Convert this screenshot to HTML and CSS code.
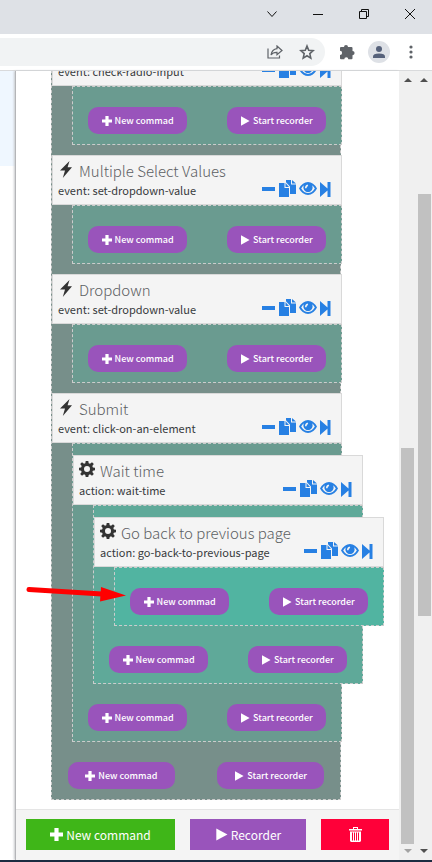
FILE: index.html
```html
<!DOCTYPE html>
<html lang="en">
<head>
<meta charset="utf-8">
<title>Command tree</title>
<link rel="stylesheet" href="styles.css">
</head>
<body>
<svg class="sprite" aria-hidden="true">
  <symbol id="plus" viewBox="0 0 10 10"><path d="M3.4 0h3.2v3.4H10v3.2H6.6V10H3.4V6.6H0V3.4h3.4z"/></symbol>
  <symbol id="play" viewBox="0 0 10 10"><path d="M1 .3 9.6 5 1 9.7z"/></symbol>
  <symbol id="bolt" viewBox="0 0 12 17"><path d="M9.500 0 0 9.500h5L2.800 17 12 6.200H7.600z"/></symbol>
  <symbol id="gear" viewBox="0 0 16 16"><path fill-rule="evenodd" d="M6.700 0h2.600l.4 2.200 1.300.6 2-1.500 1.800 1.800-1.500 2 .6 1.300 2.100.3v2.600l-2.100.4-.6 1.300 1.500 2-1.800 1.800-2-1.500-1.300.6L9.300 16H6.700l-.4-2.100-1.300-.6-2 1.500L1.200 13l1.500-2-.6-1.300L0 9.300V6.700l2.100-.3.6-1.300-1.500-2L3 1.300l2 1.500 1.300-.6zM8 5a3 3 0 1 0 0 6 3 3 0 0 0 0-6z"/></symbol>
  <symbol id="minus" viewBox="0 0 14 17"><path d="M0 7h13v4H0z"/></symbol>
  <symbol id="copy" viewBox="0 0 17 17"><path d="M0 3h5.500v5H10v9H0zM6.500 3 10 7H6.500zM7 0h5v4.500h5V14h-6V6.500L7 2.200zM13 0l4 3.500h-4z"/></symbol>
  <symbol id="eye" viewBox="0 0 18 17"><path fill-rule="evenodd" d="M0 8.500Q3.500 2 9 2t9 6.500Q14.500 15 9 15T0 8.500zm2.200 0Q5 13 9 13t6.800-4.500Q14.500 6.300 13 5.200a4.600 4.600 0 1 1-8 0Q3.500 6.300 2.200 8.500zM8.600 4.500Q6 5 6 8.200h1.500Q7.600 6.500 9.200 6z"/></symbol>
  <symbol id="step" viewBox="0 0 11 17"><path d="M0 2l7.500 6.500V2H10.500v15H7.500v-6.500L0 17z"/></symbol>
  <symbol id="trash" viewBox="0 0 13 15"><path fill-rule="evenodd" d="M4 0h5v2h4v1.500H0V2h4zm1 1v1h3V1zM1 4.500h11V14l-1 1H2l-1-1zM3 5.500v8h1v-8zm2 0v8h1v-8zm2 0v8h1v-8zm2 0v8h1v-8z"/></symbol>
</svg>

<div class="window">
  <header class="titlebar">
    <button class="caption" aria-label="Search tabs"><svg width="10" height="10" viewBox="0 0 10 10"><path d="M.5 2.500 5 7.500 9.500 2.500"/></svg></button>
    <button class="caption" aria-label="Minimize"><svg width="10" height="10" viewBox="0 0 10 10"><path d="M0 5.500h10"/></svg></button>
    <button class="caption" aria-label="Restore"><svg width="10" height="10" viewBox="0 0 10 10"><path d="M.5 2.500h7v7h-7zM2.500 2.500v-2h7v7h-2"/></svg></button>
    <button class="caption" aria-label="Close"><svg width="10" height="10" viewBox="0 0 10 10"><path d="M0 0l10 10M10 0 0 10"/></svg></button>
  </header>
  <div class="toolbar">
    <div class="omnibox">
      <button class="tool" aria-label="Share"><svg class="line" width="16" height="14" viewBox="0 0 16 14"><path d="M1 3.500V13h11.500v-2.500M10 1l5 4.500-5 4.200V7.300q-4-.2-6 2.700Q5 4.200 10 3.700z"/></svg></button>
      <button class="tool" aria-label="Bookmark"><svg class="line star" width="16" height="16" viewBox="0 0 16 16"><path d="M8 2l1.700 4.200 4.500.4-3.400 3 1 4.500L8 11.700l-3.800 2.400 1-4.500-3.400-3 4.500-.4z"/></svg></button>
    </div>
    <button class="tool" aria-label="Extensions"><svg width="16" height="16" viewBox="0 0 16 16"><path d="M5 3a2 2 0 0 1 4 0h3.500q1 0 1 1v3a2.100 2.100 0 0 1 0 4.200v3q0 1-1 1H9.300a2 2 0 0 0-4 0H2q-1 0-1-1V11a2.100 2.100 0 0 0 0-4.200V4q0-1 1-1z"/></svg></button>
    <button class="tool" aria-label="Profile"><svg width="22" height="22" viewBox="0 0 22 22"><circle class="disc" cx="11" cy="11" r="11"/><circle class="person" cx="11" cy="8" r="3"/><path class="person" d="M5 17v-1.500q0-3 6-3t6 3V17z"/></svg></button>
    <button class="tool" aria-label="Menu"><svg width="4" height="14" viewBox="0 0 4 14"><circle cx="2" cy="2" r="1.600"/><circle cx="2" cy="7" r="1.600"/><circle cx="2" cy="12" r="1.600"/></svg></button>
  </div>

  <div class="page">
    <aside class="behind"><div class="selected"></div></aside>
    <main class="panel">
      <div class="scroller">
        <div class="tree">
          <section class="node">
            <div class="head">
              <div class="info"><h2></h2><p>event: check-radio-input</p></div>
              <div class="actions"><button aria-label="Collapse"><svg width="14" height="17"><use href="#minus"/></svg></button><button aria-label="Copy"><svg width="17" height="17"><use href="#copy"/></svg></button><button aria-label="View"><svg width="18" height="17"><use href="#eye"/></svg></button><button aria-label="Run step"><svg width="11" height="17"><use href="#step"/></svg></button></div>
            </div>
            <div class="body">
              <div class="row"><button class="pill"><svg><use href="#plus"/></svg>New commad</button><button class="pill"><svg><use href="#play"/></svg>Start recorder</button></div>
            </div>
          </section>
          <section class="node">
            <div class="head">
              <div class="info"><h2><svg class="bolt"><use href="#bolt"/></svg>Multiple Select Values</h2><p>event: set-dropdown-value</p></div>
              <div class="actions"><button aria-label="Collapse"><svg width="14" height="17"><use href="#minus"/></svg></button><button aria-label="Copy"><svg width="17" height="17"><use href="#copy"/></svg></button><button aria-label="View"><svg width="18" height="17"><use href="#eye"/></svg></button><button aria-label="Run step"><svg width="11" height="17"><use href="#step"/></svg></button></div>
            </div>
            <div class="body">
              <div class="row"><button class="pill"><svg><use href="#plus"/></svg>New commad</button><button class="pill"><svg><use href="#play"/></svg>Start recorder</button></div>
            </div>
          </section>
          <section class="node">
            <div class="head">
              <div class="info"><h2><svg class="bolt"><use href="#bolt"/></svg>Dropdown</h2><p>event: set-dropdown-value</p></div>
              <div class="actions"><button aria-label="Collapse"><svg width="14" height="17"><use href="#minus"/></svg></button><button aria-label="Copy"><svg width="17" height="17"><use href="#copy"/></svg></button><button aria-label="View"><svg width="18" height="17"><use href="#eye"/></svg></button><button aria-label="Run step"><svg width="11" height="17"><use href="#step"/></svg></button></div>
            </div>
            <div class="body">
              <div class="row"><button class="pill"><svg><use href="#plus"/></svg>New commad</button><button class="pill"><svg><use href="#play"/></svg>Start recorder</button></div>
            </div>
          </section>
          <section class="node">
            <div class="head">
              <div class="info"><h2><svg class="bolt"><use href="#bolt"/></svg>Submit</h2><p>event: click-on-an-element</p></div>
              <div class="actions"><button aria-label="Collapse"><svg width="14" height="17"><use href="#minus"/></svg></button><button aria-label="Copy"><svg width="17" height="17"><use href="#copy"/></svg></button><button aria-label="View"><svg width="18" height="17"><use href="#eye"/></svg></button><button aria-label="Run step"><svg width="11" height="17"><use href="#step"/></svg></button></div>
            </div>
            <div class="body">
              <section class="node">
                <div class="head">
                  <div class="info"><h2><svg class="gear"><use href="#gear"/></svg>Wait time</h2><p>action: wait-time</p></div>
                  <div class="actions"><button aria-label="Collapse"><svg width="14" height="17"><use href="#minus"/></svg></button><button aria-label="Copy"><svg width="17" height="17"><use href="#copy"/></svg></button><button aria-label="View"><svg width="18" height="17"><use href="#eye"/></svg></button><button aria-label="Run step"><svg width="11" height="17"><use href="#step"/></svg></button></div>
                </div>
                <div class="body level-2">
                  <section class="node">
                    <div class="head">
                      <div class="info"><h2><svg class="gear"><use href="#gear"/></svg>Go back to previous page</h2><p>action: go-back-to-previous-page</p></div>
                      <div class="actions"><button aria-label="Collapse"><svg width="14" height="17"><use href="#minus"/></svg></button><button aria-label="Copy"><svg width="17" height="17"><use href="#copy"/></svg></button><button aria-label="View"><svg width="18" height="17"><use href="#eye"/></svg></button><button aria-label="Run step"><svg width="11" height="17"><use href="#step"/></svg></button></div>
                    </div>
                    <div class="body level-3">
                      <div class="row"><button class="pill"><svg><use href="#plus"/></svg>New commad</button><button class="pill"><svg><use href="#play"/></svg>Start recorder</button></div>
                      <svg class="pointer" width="100" height="16" viewBox="0 0 100 16" aria-hidden="true"><path class="shaft" d="M3 3.500 76 8"/><path d="M75 1l25 8.500-26 6z"/></svg>
                    </div>
                  </section>
                  <div class="row"><button class="pill"><svg><use href="#plus"/></svg>New commad</button><button class="pill"><svg><use href="#play"/></svg>Start recorder</button></div>
                </div>
              </section>
              <div class="row"><button class="pill"><svg><use href="#plus"/></svg>New commad</button><button class="pill"><svg><use href="#play"/></svg>Start recorder</button></div>
            </div>
          </section>
          <div class="row wide"><button class="pill"><svg><use href="#plus"/></svg>New commad</button><button class="pill"><svg><use href="#play"/></svg>Start recorder</button></div>
        </div>
      </div>
      <footer class="footer">
        <button class="add"><svg width="13" height="13"><use href="#plus"/></svg>New command</button>
        <button class="record"><svg width="13" height="13"><use href="#play"/></svg>Recorder</button>
        <button class="delete" aria-label="Delete"><svg width="13" height="15"><use href="#trash"/></svg></button>
      </footer>
    </main>
    <div class="scrollbar inner" aria-hidden="true"><i class="up"></i><div class="track"><div class="thumb"></div></div><i class="down off"></i></div>
    <div class="scrollbar outer" aria-hidden="true"><i class="up"></i><div class="track"><div class="thumb"></div></div><i class="down"></i></div>
  </div>
  <div class="taskbar"></div>
</div>
</body>
</html>
```
FILE: styles.css
```css
* { box-sizing: border-box; }
body {
  margin: 0;
  font-family: "Noto Sans CJK SC", "Noto Sans", sans-serif;
  color: #373a3c;
  background: #fff;
}
button {
  margin: 0;
  padding: 0;
  border: 0;
  background: none;
  font: inherit;
  color: inherit;
}
svg { display: block; flex: none; fill: currentColor; }
.sprite { position: absolute; width: 0; height: 0; }

.window { display: flex; flex-direction: column; height: 100vh; overflow: hidden; }

/* Browser frame */
.titlebar {
  display: flex;
  justify-content: flex-end;
  flex: none;
  height: 34px;
  padding-bottom: 6px;
  margin-right: -1px;
  background: #dee1e6;
}
.caption { display: grid; place-items: center; width: 46px; }
.caption svg { fill: none; stroke: #111; overflow: visible; }
.toolbar {
  display: flex;
  align-items: center;
  flex: none;
  height: 37px;
  padding-right: 5px;
  border-bottom: 1px solid #d9dadc;
  color: #5f6368;
}
.omnibox {
  display: flex;
  justify-content: flex-end;
  flex: 1;
  height: 28px;
  margin-right: 6px;
  padding-right: 2px;
  border-radius: 0 14px 14px 0;
  background: #f1f3f4;
}
.tool { display: grid; place-items: center; width: 32px; height: 28px; }
.line { fill: none; stroke: #5f6368; stroke-width: 1.2; }
.star { stroke-width: 1.6; }
.disc { fill: #dee1e6; }
.person { fill: #56617a; }

/* Page */
.page { display: flex; flex: 1; min-height: 0; }
.behind { flex: none; width: 15px; }
.selected { height: 95px; background: #eff7ff; }
.panel {
  display: flex;
  flex-direction: column;
  flex: 1;
  min-width: 0;
  border-left: 1px solid #b4b5b8;
  box-shadow: -1px 0 2px #c8c9cc;
}
.scroller { flex: 1; min-height: 0; overflow: hidden; }

/* Command tree */
.tree {
  margin: -36px 58px 0 35px;
  border: 1px dashed #ccc;
  background: #778f8a;
}
.node { margin-right: -22px; }
.tree > .node { margin: 0 -2px 10px 0; }
.tree > .node:nth-last-child(2) { margin-bottom: 0; }
.head {
  display: flex;
  justify-content: space-between;
  height: 50px;
  padding: 3px 10px 0 5px;
  border: 1px solid #d9d9d9;
  background: #f4f4f4;
}
.info { white-space: nowrap; }
.info h2 {
  display: flex;
  align-items: center;
  gap: 5px;
  height: 24px;
  margin: 0;
  font-size: 15px;
  line-height: 24px;
  font-weight: 300;
  color: #5c6063;
}
.info p { margin: 0; font-size: 11px; line-height: 14px; }
.bolt { width: 12px; height: 17px; margin: 0 2px 4px; color: #333; }
.gear { width: 16px; height: 16px; margin-bottom: 5px; color: #333; }
.actions {
  display: flex;
  align-items: flex-end;
  gap: 3px;
  padding-bottom: 7px;
  color: #2780e3;
}
.body {
  position: relative;
  margin-left: 20px;
  border: 1px dashed #ccc;
  background: #6a9b90;
}
.body > .node { padding-top: 11px; }
.level-2 { background: #5fa999; }
.level-3 { background: #51b4a1; }
.row {
  display: grid;
  grid-template-columns: 5fr 2fr 5fr;
  padding: 20px 15px 10px;
}
.row.wide { padding: 20px 16px 10px; }
.row .pill:last-child { grid-column: 3; }
.pill {
  display: flex;
  align-items: center;
  justify-content: center;
  gap: 3px;
  height: 27px;
  border-radius: 10px;
  background: #9954bb;
  color: #fff;
  font-size: 9px;
  font-weight: 500;
  white-space: nowrap;
}
.pill svg { width: 10px; height: 10px; }
.pointer {
  position: absolute;
  left: -89px;
  top: 18px;
  color: #f00;
}
.shaft { fill: none; stroke: #f00; stroke-width: 5; stroke-linecap: round; }

/* Footer */
.footer {
  display: grid;
  grid-template-columns: 149fr 116fr 68fr;
  gap: 15px;
  flex: none;
  padding: 9px 10px 10px;
  border-top: 1px solid #e5e5e5;
  background: #f4f4f4;
}
.footer button {
  display: flex;
  align-items: center;
  justify-content: center;
  gap: 3px;
  height: 31px;
  color: #fff;
  font-size: 12px;
}
.footer .add { background: #3fb618; }
.footer .record { background: #9954bb; }
.footer .delete { background: #ff0039; }

/* Scrollbars */
.scrollbar {
  display: flex;
  flex-direction: column;
  align-items: center;
  flex: none;
  width: 17px;
  padding: 7px 0;
  background: #f0f0f0;
}
.scrollbar.outer { width: 16px; }
.up, .down { border: 4px solid transparent; }
.up { border-top: 0; border-bottom-color: #505050; }
.down { border-bottom: 0; border-top-color: #505050; }
.down.off { border-top-color: #a3a3a3; }
.track { display: flex; flex-direction: column; flex: 1; width: 13px; }
.thumb { background: #c1c1c1; }
.inner .track { justify-content: flex-end; margin-bottom: 5px; }
.inner .thumb { height: 52%; }
.outer .thumb { height: 55%; margin-top: 112px; }

.taskbar { flex: none; height: 2px; background: #1b2b40; }
```
